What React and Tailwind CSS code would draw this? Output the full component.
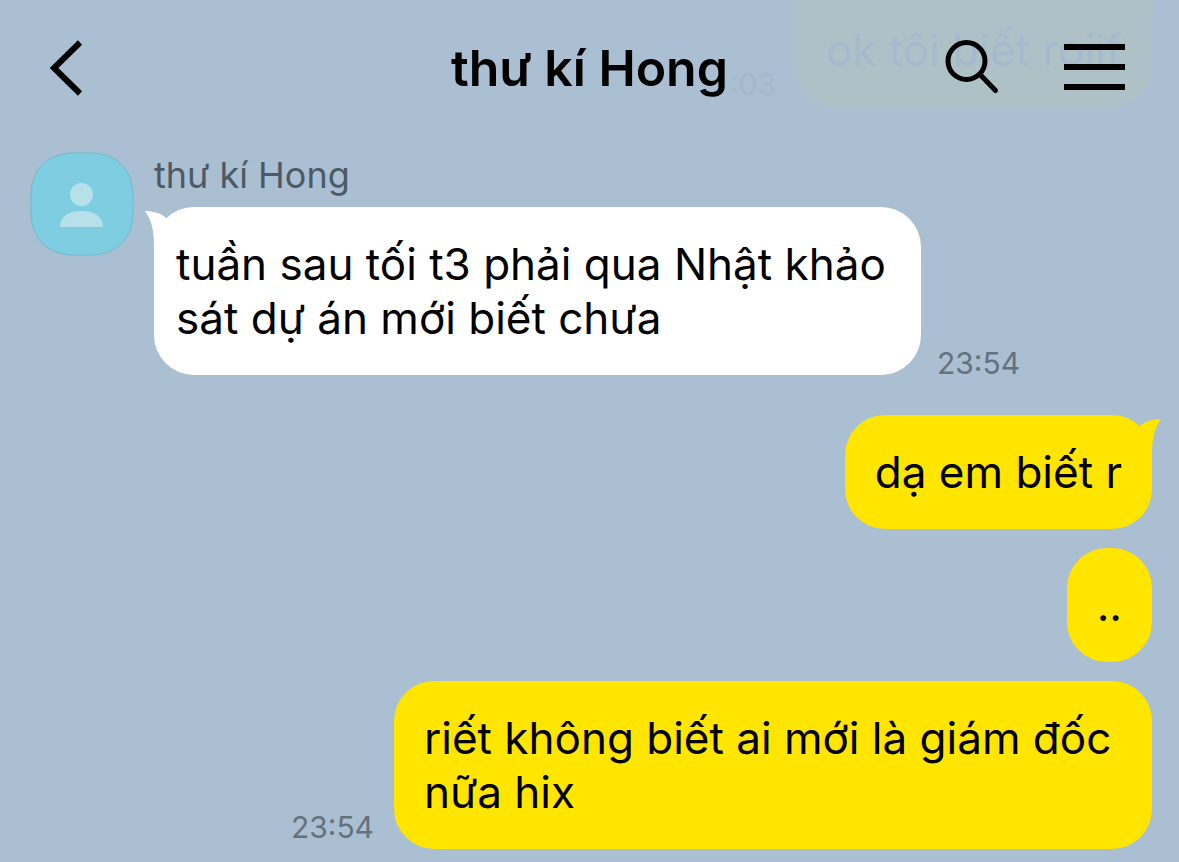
import React from 'react';

const messages = [
  { id: 1, text: 'dạ em biết r', tail: true },
  { id: 2, text: '..' },
  { id: 3, text: 'riết không biết ai mới là giám đốc nữa hix', time: '23:54' },
];

const Tail = ({ className }) => (
  <svg viewBox="0 0 34 40" className={`absolute h-10 w-[34px] ${className}`} aria-hidden="true">
    <path d="M0 4C8 4 16 6 21 11L34 22V40H9C9 24 7 14 0 4Z" fill="currentColor" />
  </svg>
);

const Avatar = () => (
  <svg viewBox="0 0 104 104" className="size-[104px] shrink-0" aria-hidden="true">
    <path
      d="M42 1H62C87 2 102 17 103 42V62C102 87 87 102 62 103H42C17 102 2 87 1 62V42C2 17 17 2 42 1Z"
      fill="#7fcde1"
      stroke="#72b9cc"
      strokeWidth="1"
    />
    <circle cx="51.500" cy="42.500" r="11.500" fill="#b6e1ea" />
    <path d="M30 75C30 65 38 59 51.500 59S73 65 73 75Z" fill="#b6e1ea" />
  </svg>
);

const Header = () => (
  <header className="relative isolate grid h-[136px] grid-cols-[1fr_auto_1fr] items-center overflow-hidden px-10">
    {/* older message scrolled under the translucent bar */}
    <div className="absolute top-0 right-[27px] -z-10 flex h-[107px] items-end gap-5" aria-hidden="true">
      <span className="text-[30px] leading-[46px] text-[#a4b9cc]">:03</span>
      <div className="relative flex h-full items-center rounded-b-[40px] bg-[#aec1c7] px-[30px] pb-2 text-[44px] text-[#a5bacd]">
        <Tail className="-top-5 -right-[9px] -scale-x-100 text-[#aec1c7]" />
        <span>ok tôi biết roiif</span>
      </div>
    </div>

    <button type="button" aria-label="Back" className="justify-self-start">
      <svg viewBox="0 0 52 60" className="h-[60px] w-[52px]" fill="none" stroke="#000" strokeWidth="6">
        <path d="M40 4.500L14 30L40 55.500" />
      </svg>
    </button>
    <h1 className="text-[50px] font-semibold text-black">thư kí Hong</h1>
    <div className="flex items-center gap-16 justify-self-end pr-[14px]">
      <button type="button" aria-label="Search">
        <svg viewBox="0 0 56 56" className="size-14" fill="none" stroke="#000" strokeWidth="5">
          <circle cx="22.500" cy="21" r="18.500" />
          <path d="M36.500 35L51.500 50.500" strokeLinecap="round" />
        </svg>
      </button>
      <button type="button" aria-label="Menu">
        <svg viewBox="0 0 61 56" className="h-14 w-[61px]" stroke="#000" strokeWidth="6">
          <path d="M0 7H61M0 27H61M0 47H61" />
        </svg>
      </button>
    </div>
  </header>
);

const Time = ({ children }) => (
  <time className="text-[30px] leading-6 text-[#64727f]">{children}</time>
);

const App = () => {
  return (
    <div className="min-h-screen bg-[#aabfd1] font-['Inter',sans-serif]">
      <Header />
      <main className="flex flex-col gap-10 pt-4 pr-[27px] pb-3 pl-[30px]">
        <section className="flex items-start gap-5">
          <Avatar />
          <div>
            <h2 className="mb-2 text-[36px] leading-[47px] text-[#4c5a67]">thư kí Hong</h2>
            <div className="flex items-end gap-4">
              <div className="relative max-w-[767px] rounded-[40px] bg-white py-[30px] pr-8 pl-[22px] text-[44px] leading-[54px] text-black">
                <Tail className="top-0 -left-[9px] text-white" />
                <p className="relative">tuần sau tối t3 phải qua Nhật khảo sát dự án mới biết chưa</p>
              </div>
              <Time>23:54</Time>
            </div>
          </div>
        </section>

        <section className="flex flex-col gap-[19px]">
          {messages.map((message) => (
            <div key={message.id} className="flex items-end justify-end gap-5">
              {message.time && (
                <div className="flex pb-[10px]">
                  <Time>{message.time}</Time>
                </div>
              )}
              <div className="relative max-w-[758px] rounded-[40px] bg-[#ffe500] px-[30px] py-[30px] text-[44px] leading-[54px] text-black">
                {message.tail && <Tail className="top-0 -right-[9px] -scale-x-100 text-[#ffe500]" />}
                <p className="relative">{message.text}</p>
              </div>
            </div>
          ))}
        </section>
      </main>
    </div>
  );
};

export default App;
